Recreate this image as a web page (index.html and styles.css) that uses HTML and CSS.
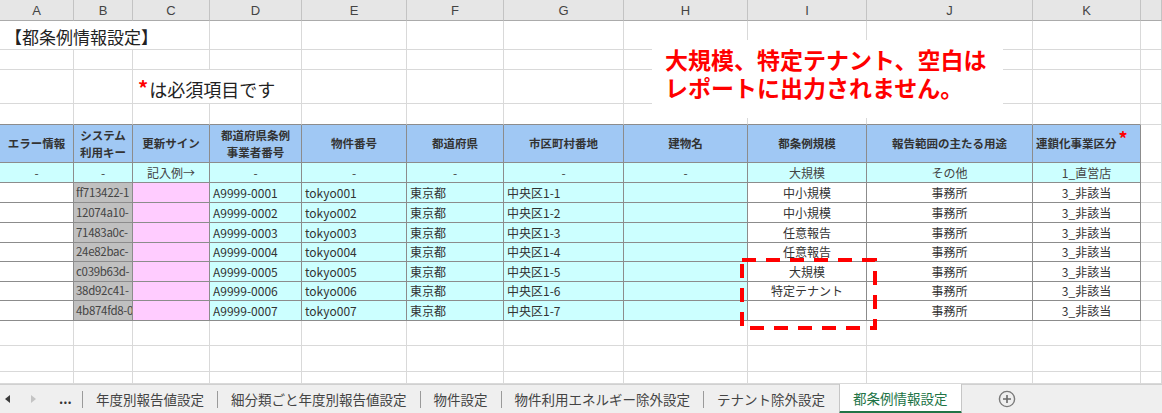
FILE: index.html
```html
<!DOCTYPE html>
<html lang="ja">
<head>
<meta charset="utf-8">
<title>都条例情報設定</title>
<link rel="stylesheet" href="styles.css">
</head>
<body>
<div class="sheet">
  <!-- column headers -->
  <div class="c h">A</div><div class="c h">B</div><div class="c h">C</div><div class="c h">D</div><div class="c h">E</div><div class="c h">F</div><div class="c h">G</div><div class="c h">H</div><div class="c h">I</div><div class="c h">J</div><div class="c h">K</div><div class="c h"></div>

  <!-- row 1 -->
  <div class="c title span3">【都条例情報設定】</div><div class="c"></div><div class="c"></div><div class="c"></div><div class="c"></div><div class="c"></div><div class="c"></div><div class="c"></div><div class="c"></div><div class="c"></div>

  <!-- row 2 -->
  <div class="c"></div><div class="c"></div><div class="c"></div><div class="c"></div><div class="c"></div><div class="c"></div><div class="c"></div><div class="c"></div><div class="c"></div><div class="c"></div><div class="c"></div><div class="c"></div>

  <!-- row 3 -->
  <div class="c"></div><div class="c"></div><div class="c req span2"><span class="star">*</span>は必須項目です</div><div class="c"></div><div class="c"></div><div class="c"></div><div class="c"></div><div class="c"></div><div class="c"></div><div class="c"></div><div class="c"></div>

  <!-- row 4 -->
  <div class="c tb"></div><div class="c tb"></div><div class="c tb"></div><div class="c tb"></div><div class="c tb"></div><div class="c tb"></div><div class="c tb"></div><div class="c tb"></div><div class="c tb"></div><div class="c tb"></div><div class="c tb"></div><div class="c"></div>

  <!-- table header -->
  <div class="c t th">エラー情報</div>
  <div class="c t th">システム<br>利用キー</div>
  <div class="c t th">更新サイン</div>
  <div class="c t th">都道府県条例<br>事業者番号</div>
  <div class="c t th">物件番号</div>
  <div class="c t th">都道府県</div>
  <div class="c t th">市区町村番地</div>
  <div class="c t th">建物名</div>
  <div class="c t th">都条例規模</div>
  <div class="c t th">報告範囲の主たる用途</div>
  <div class="c t th th-req">連鎖化事業区分<span class="star small">*</span></div>
  <div class="c"></div>

  <!-- example row -->
  <div class="c t ex ctr">-</div><div class="c t ex ctr">-</div><div class="c t ex ctr">記入例→</div><div class="c t ex ctr">-</div><div class="c t ex ctr">-</div><div class="c t ex ctr">-</div><div class="c t ex ctr">-</div><div class="c t ex ctr">-</div><div class="c t ex ctr">大規模</div><div class="c t ex ctr">その他</div><div class="c t ex ctr">1_直営店</div><div class="c"></div>

  <!-- data rows -->
  <div class="c t"></div><div class="c t gy">ff713422-1</div><div class="c t pk"></div><div class="c t cy">A9999-0001</div><div class="c t cy">tokyo001</div><div class="c t cy">東京都</div><div class="c t cy">中央区1-1</div><div class="c t cy"></div><div class="c t ctr">中小規模</div><div class="c t ctr">事務所</div><div class="c t ctr">3_非該当</div><div class="c"></div>

  <div class="c t"></div><div class="c t gy">12074a10-</div><div class="c t pk"></div><div class="c t cy">A9999-0002</div><div class="c t cy">tokyo002</div><div class="c t cy">東京都</div><div class="c t cy">中央区1-2</div><div class="c t cy"></div><div class="c t ctr">中小規模</div><div class="c t ctr">事務所</div><div class="c t ctr">3_非該当</div><div class="c"></div>

  <div class="c t"></div><div class="c t gy">71483a0c-</div><div class="c t pk"></div><div class="c t cy">A9999-0003</div><div class="c t cy">tokyo003</div><div class="c t cy">東京都</div><div class="c t cy">中央区1-3</div><div class="c t cy"></div><div class="c t ctr">任意報告</div><div class="c t ctr">事務所</div><div class="c t ctr">3_非該当</div><div class="c"></div>

  <div class="c t"></div><div class="c t gy">24e82bac-</div><div class="c t pk"></div><div class="c t cy">A9999-0004</div><div class="c t cy">tokyo004</div><div class="c t cy">東京都</div><div class="c t cy">中央区1-4</div><div class="c t cy"></div><div class="c t ctr">任意報告</div><div class="c t ctr">事務所</div><div class="c t ctr">3_非該当</div><div class="c"></div>

  <div class="c t"></div><div class="c t gy">c039b63d-</div><div class="c t pk"></div><div class="c t cy">A9999-0005</div><div class="c t cy">tokyo005</div><div class="c t cy">東京都</div><div class="c t cy">中央区1-5</div><div class="c t cy"></div><div class="c t ctr">大規模</div><div class="c t ctr">事務所</div><div class="c t ctr">3_非該当</div><div class="c"></div>

  <div class="c t"></div><div class="c t gy">38d92c41-</div><div class="c t pk"></div><div class="c t cy">A9999-0006</div><div class="c t cy">tokyo006</div><div class="c t cy">東京都</div><div class="c t cy">中央区1-6</div><div class="c t cy"></div><div class="c t ctr">特定テナント</div><div class="c t ctr">事務所</div><div class="c t ctr">3_非該当</div><div class="c"></div>

  <div class="c t"></div><div class="c t gy">4b874fd8-0</div><div class="c t pk"></div><div class="c t cy">A9999-0007</div><div class="c t cy">tokyo007</div><div class="c t cy">東京都</div><div class="c t cy">中央区1-7</div><div class="c t cy"></div><div class="c t ctr"></div><div class="c t ctr">事務所</div><div class="c t ctr">3_非該当</div><div class="c"></div>

  <!-- empty rows -->
  <div class="c"></div><div class="c"></div><div class="c"></div><div class="c"></div><div class="c"></div><div class="c"></div><div class="c"></div><div class="c"></div><div class="c"></div><div class="c"></div><div class="c"></div><div class="c"></div>
  <div class="c"></div><div class="c"></div><div class="c"></div><div class="c"></div><div class="c"></div><div class="c"></div><div class="c"></div><div class="c"></div><div class="c"></div><div class="c"></div><div class="c"></div><div class="c"></div>
  <div class="c"></div><div class="c"></div><div class="c"></div><div class="c"></div><div class="c"></div><div class="c"></div><div class="c"></div><div class="c"></div><div class="c"></div><div class="c"></div><div class="c"></div><div class="c"></div>
</div>

<div class="tabs">
  <div class="nav">
    <svg class="arr" width="5" height="8" viewBox="0 0 5 8"><path d="M5 0V8L0 4Z" fill="#3a3a3a"/></svg>
    <svg class="arr arr-r" width="5" height="8" viewBox="0 0 5 8"><path d="M0 0V8L5 4Z" fill="#c4c4c4"/></svg>
    <span class="more">...</span>
  </div>
  <span class="sep"></span>
  <span class="tab">年度別報告値設定</span>
  <span class="sep"></span>
  <span class="tab">細分類ごと年度別報告値設定</span>
  <span class="sep"></span>
  <span class="tab">物件設定</span>
  <span class="sep"></span>
  <span class="tab">物件利用エネルギー除外設定</span>
  <span class="sep"></span>
  <span class="tab">テナント除外設定</span>
  <span class="tab active">都条例情報設定</span>
  <svg class="plus" width="18" height="18" viewBox="0 0 18 18"><circle cx="9" cy="9" r="7.6" fill="none" stroke="#7a7a7a" stroke-width="1.4"/><path d="M9 5V13M5 9H13" stroke="#6a6a6a" stroke-width="1.6"/></svg>
</div>

<div class="note">大規模、特定テナント、空白は<br>レポートに出力されません。</div>

<svg class="dash" width="138" height="73" viewBox="0 0 138 73"><rect x="2" y="2" width="133" height="68" fill="none" stroke="#ff0000" stroke-width="4" stroke-dasharray="14 10"/></svg>
</body>
</html>
```

FILE: styles.css
```css
* { box-sizing: border-box; margin: 0; padding: 0; }

body {
  margin: 0;
  width: 1162px;
  height: 413px;
  overflow: hidden;
  position: relative;
  background: #ffffff;
  font-family: "Noto Sans CJK JP", "Noto Sans", sans-serif;
  color: #222;
}

.sheet {
  display: grid;
  grid-template-columns: 74px 59px 77px 92px 105px 97px 120px 124px 119px 166px 108px 21px;
  grid-template-rows: 21px 29px 20px 34px 21px 38px 20px 20px 20px 20px 19px 20px 19px 20px 25px 26px 12px;
  height: 384px;
  overflow: hidden;
}

.c {
  border-right: 1px solid #d9d9d9;
  border-bottom: 1px solid #d9d9d9;
  font-size: 12px;
  display: flex;
  align-items: center;
  padding: 0 3px;
  white-space: nowrap;
  overflow: hidden;
  line-height: 1;
  color: #333;
}

.h {
  background: #e6e6e6;
  border-right-color: #c3c3c3;
  border-bottom-color: #ababab;
  justify-content: center;
  font-family: "Liberation Sans", Arial, sans-serif;
  font-size: 13px;
  color: #444;
}

.span3 { grid-column: span 3; }
.span2 { grid-column: span 2; }

.title {
  font-size: 17px;
  color: #222;
  padding-left: 5px;
  padding-top: 2px;
}

.req {
  font-size: 18px;
  color: #222;
  padding-left: 5px;
  padding-top: 4px;
}

.star {
  color: #ff0000;
  font-size: 20px;
  font-weight: bold;
  margin-right: 1px;
  position: relative;
  top: -1px;
}

.star.small {
  font-size: 18px;
  margin: 0 0 0 2px;
  top: -5px;
}

.tb { border-bottom-color: #8c8c8c; }

.t {
  border-right-color: #8c8c8c;
  border-bottom-color: #8c8c8c;
}

.th {
  background: #a0c8f4;
  font-weight: bold;
  font-size: 11.5px;
  justify-content: center;
  text-align: center;
  line-height: 17px;
  white-space: normal;
  color: #333;
  padding: 0 1px;
}

.th-req { justify-content: flex-start; padding-left: 3px; }

.ex { background: #ccffff; color: #444; }
.cy { background: #ccffff; }
.gy { background: #c0c0c0; color: #444; font-size: 11.5px; letter-spacing: -0.3px; padding-left: 2px; }
.pk { background: #ffccff; }
.ctr { justify-content: center; }

.tabs {
  display: flex;
  align-items: center;
  height: 29px;
  background: #efefef;
  border-top: 1px solid #d0d0d0;
  font-size: 13.5px;
  color: #444;
  white-space: nowrap;
}

.nav {
  width: 82px;
  height: 100%;
  display: flex;
  align-items: center;
  flex: none;
}

.arr { margin-left: 5px; flex: none; }
.arr-r { margin-left: 21px; }

.more {
  margin-left: 23px;
  font-weight: bold;
  font-size: 13px;
  color: #333;
  position: relative;
  top: -1px;
}

.sep {
  width: 1px;
  height: 17px;
  background: #9a9a9a;
  flex: none;
}

.tab {
  padding: 0 13px;
  height: 100%;
  display: flex;
  align-items: center;
  flex: none;
}

.tab.kana { letter-spacing: -0.4px; }

.tab.active {
  background: #ffffff;
  color: #217346;
  border-left: 1px solid #c6c6c6;
  border-right: 1px solid #c6c6c6;
  border-bottom: 3px solid #217346;
  margin-top: -1px;
  height: 30px;
  padding-top: 2px;
  margin-left: 1px;
}

.plus { margin-left: 36px; flex: none; }

.note {
  position: absolute;
  left: 652px;
  top: 40px;
  width: 351px;
  height: 78px;
  background: #ffffff;
  padding: 5px 0 0 13px;
  color: #ff0000;
  font-size: 23px;
  font-weight: bold;
  line-height: 28px;
  white-space: nowrap;
}

.dash {
  position: absolute;
  left: 740px;
  top: 258px;
}
```
